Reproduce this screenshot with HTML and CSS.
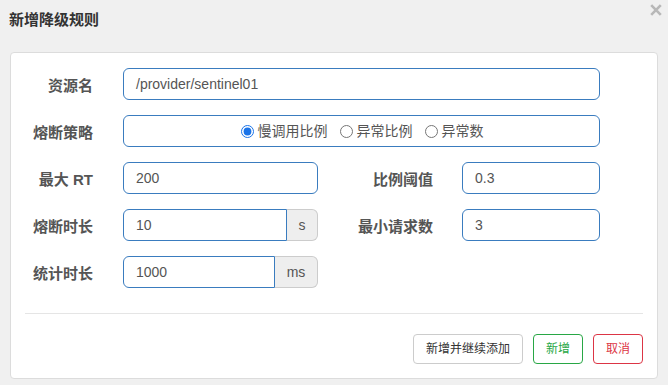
FILE: index.html
```html
<!DOCTYPE html>
<html lang="zh-CN">
<head>
<meta charset="utf-8">
<title>新增降级规则</title>
<link rel="stylesheet" href="styles.css">
</head>
<body>
<div class="dialog">
  <div class="header">
    <div class="title">新增降级规则</div>
    <svg class="close" width="12" height="12" viewBox="0 0 12 12" aria-label="关闭">
      <path d="M1.2 1.2 L10.8 10.8 M10.8 1.2 L1.2 10.8" stroke="#b8b8b8" stroke-width="2.6" stroke-linecap="butt"/>
    </svg>
  </div>
  <div class="card">
    <div class="form">
      <div class="label">资源名</div>
      <div class="input span3">/provider/sentinel01</div>

      <div class="label">熔断策略</div>
      <div class="input span3 radios">
        <label class="opt"><input type="radio" name="g" checked>慢调用比例</label>
        <label class="opt"><input type="radio" name="g">异常比例</label>
        <label class="opt"><input type="radio" name="g">异常数</label>
      </div>

      <div class="label">最大 RT</div>
      <div class="input">200</div>
      <div class="label label-r">比例阈值</div>
      <div class="input">0.3</div>

      <div class="label">熔断时长</div>
      <div class="group">
        <div class="input grouped">10</div>
        <div class="addon addon-s">s</div>
      </div>
      <div class="label label-r">最小请求数</div>
      <div class="input">3</div>

      <div class="label">统计时长</div>
      <div class="group">
        <div class="input grouped">1000</div>
        <div class="addon addon-ms">ms</div>
      </div>
    </div>
    <div class="divider"></div>
    <div class="footer">
      <button class="btn btn-default">新增并继续添加</button>
      <button class="btn btn-success">新增</button>
      <button class="btn btn-danger">取消</button>
    </div>
  </div>
</div>
</body>
</html>
```

FILE: styles.css
```css
* { box-sizing: border-box; }
html, body {
  margin: 0;
  padding: 0;
  background: #f0f0f0;
  font-family: "Liberation Sans", "Noto Sans CJK SC", sans-serif;
  color: #555;
}
.dialog {
  width: 668px;
  height: 385px;
  padding: 0 10px;
}
.header {
  position: relative;
  height: 52px;
  padding: 11px 0 0 0;
}
.title {
  margin-left: -1px;
  font-size: 15px;
  line-height: 18px;
  font-weight: bold;
  color: #333;
}
.close {
  position: absolute;
  right: -4px;
  top: 4px;
  display: block;
}
.card {
  background: #fff;
  border: 1px solid #dcdcdc;
  border-radius: 4px;
  padding: 15px 0 14px;
}
.form {
  display: grid;
  grid-template-columns: 112px 195px 144px 138px;
  grid-auto-rows: 32px;
  row-gap: 15px;
}
.label {
  display: flex;
  align-items: center;
  justify-content: flex-end;
  padding-right: 30px;
  font-size: 15px;
  font-weight: bold;
  color: #555;
}
.label-r { padding-right: 29px; }
.input {
  display: flex;
  align-items: center;
  height: 32px;
  border: 1px solid #3a7cbf;
  border-radius: 6px;
  padding: 0 12px;
  font-size: 14px;
  color: #555;
  background: #fff;
}
.span3 { grid-column: 2 / 5; }
.radios {
  justify-content: center;
  padding-left: 13px;
}
.opt {
  display: flex;
  align-items: center;
  gap: 4px;
  font-size: 14px;
  line-height: 16px;
  color: #555;
  margin-right: 12px;
}
.opt:last-child { margin-right: 0; }
.opt input {
  margin: 0;
  width: 13px;
  height: 13px;
  accent-color: #1a73e8;
}
.group {
  display: flex;
  height: 32px;
}
.grouped {
  flex: 1;
  border-radius: 6px 0 0 6px;
}
.addon {
  display: flex;
  align-items: center;
  justify-content: center;
  border: 1px solid #cccccc;
  border-left: none;
  border-radius: 0 6px 6px 0;
  background: #eeeeee;
  font-size: 14px;
  color: #555;
}
.addon-s { width: 31px; }
.addon-ms { width: 43px; }
.divider {
  margin: 25px 14px 0;
  border-top: 1px solid #e5e5e5;
}
.footer {
  display: flex;
  justify-content: flex-end;
  gap: 10px;
  padding: 20px 14px 0 0;
}
.btn {
  height: 30px;
  padding: 0 12px;
  font-family: "Liberation Sans", "Noto Sans CJK SC", sans-serif;
  font-size: 12px;
  line-height: 28px;
  background: #fff;
  border-radius: 4px;
  border: 1px solid #ccc;
  color: #333;
}
.btn-success { border-color: #28a745; color: #28a745; }
.btn-danger { border-color: #dc3545; color: #dc3545; }
```
